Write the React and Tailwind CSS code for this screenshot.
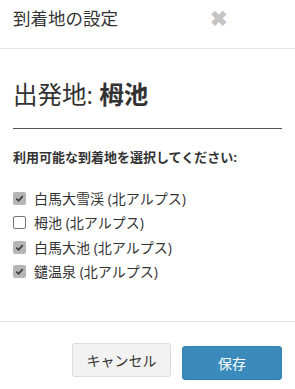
const FONT = { fontFamily: '"Open Sans", "Noto Sans CJK JP", sans-serif' };

const items = [
  { label: '白馬大雪渓 (北アルプス)', checked: true },
  { label: '栂池 (北アルプス)', checked: false },
  { label: '白馬大池 (北アルプス)', checked: true },
  { label: '鑓温泉 (北アルプス)', checked: true },
];

function Check({ checked }) {
  if (!checked) {
    return <span className="w-[13px] h-[13px] rounded-[2px] border border-[#767676] bg-white shrink-0" />;
  }
  return (
    <span className="w-[13px] h-[13px] rounded-[2px] bg-[#b5b5b5] shrink-0 flex items-center justify-center">
      <svg viewBox="0 0 10 10" className="w-[9px] h-[9px]">
        <path d="M1.5 5.2 L4 7.6 L8.6 2.4" stroke="#3c3c3c" strokeWidth="1.8" fill="none" />
      </svg>
    </span>
  );
}

export default function App() {
  return (
    <div className="w-[295px] h-[389px] bg-white text-[#333] flex flex-col" style={FONT}>
      <div className="h-[49px] border-b border-[#e5e5e5] flex items-start px-[13px] pt-[6px] shrink-0">
        <h4 className="text-[17.5px] leading-[24px] flex-1">到着地の設定</h4>
        <span className="text-[#c4c4c4] text-[21px] leading-[22px] mr-[54px] mt-[1px] font-bold">✖</span>
      </div>
      <div className="px-[13px] flex-1 border-b border-[#e5e5e5]">
        <h2 className="text-[24.5px] leading-[30px] mt-[31px]">
          出発地: <b className="font-bold">栂池</b>
        </h2>
        <div className="mt-[18px] border-t border-[#555]" />
        <p className="font-bold text-[13px] leading-[18px] mt-[19px]">利用可能な到着地を選択してください:</p>
        <div className="mt-[20px] flex flex-col">
          {items.map((it) => (
            <label key={it.label} className="flex items-center gap-[8px] h-[24.5px] text-[14px]">
              <Check checked={it.checked} />
              <span>{it.label}</span>
            </label>
          ))}
        </div>
      </div>
      <div className="h-[67px] shrink-0 flex items-start justify-end gap-[11px] pr-[13px]">
        <button className="mt-[21px] w-[99px] h-[34px] bg-[#f2f2f2] border border-[#dcdcdc] rounded-[3px] text-[14px] text-[#333]">
          キャンセル
        </button>
        <button className="mt-[24px] w-[100px] h-[34px] bg-[#3a8bbb] border border-[#3580ad] rounded-[3px] text-[14px] text-white">
          保存
        </button>
      </div>
    </div>
  );
}
